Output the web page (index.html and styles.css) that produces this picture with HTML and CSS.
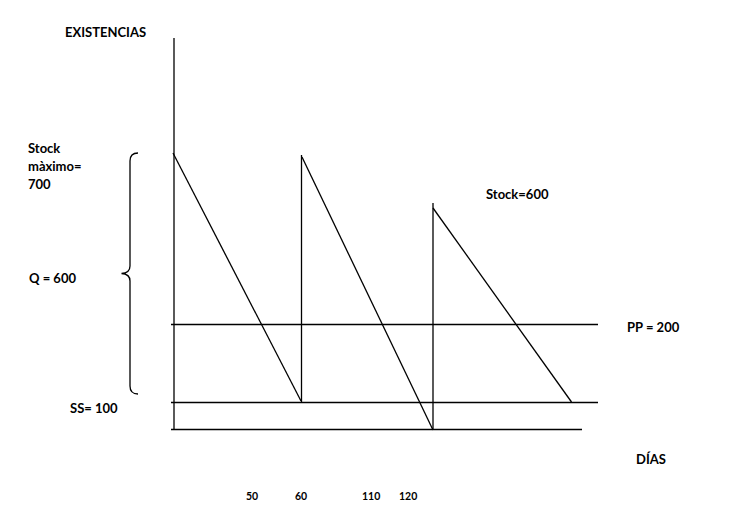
FILE: index.html
```html
<!DOCTYPE html>
<html lang="es">
<head>
<meta charset="utf-8">
<title>Existencias</title>
<link rel="stylesheet" href="styles.css">
</head>
<body>
<svg class="chart" width="734" height="522" viewBox="0 0 734 522" xmlns="http://www.w3.org/2000/svg">
  <g class="lines">
    <line x1="174" y1="38" x2="174" y2="430"/>
    <line x1="171" y1="429.5" x2="582" y2="429.5"/>
    <line x1="171" y1="324.5" x2="598" y2="324.5"/>
    <line x1="171" y1="402.5" x2="598" y2="402.5"/>
    <line x1="173" y1="153" x2="301" y2="401"/>
    <line x1="301.5" y1="402" x2="301.5" y2="155"/>
    <line x1="302" y1="157" x2="433" y2="430"/>
    <line x1="433" y1="430" x2="433" y2="203"/>
    <line x1="433" y1="208" x2="571.5" y2="402"/>
    <path d="M138,153 Q130,153 130,161 L130,266 Q130,273 121.5,273.5 Q130,274 130,281 L130,386 Q130,394 138,394"/>
  </g>
  <g class="labels">
    <text x="65" y="37">EXISTENCIAS</text>
    <text x="28" y="153">Stock</text>
    <text x="28" y="171">màximo=</text>
    <text x="28" y="189">700</text>
    <text x="29" y="283">Q = 600</text>
    <text x="70" y="413">SS= 100</text>
    <text x="486" y="199">Stock=600</text>
    <text x="627" y="332">PP = 200</text>
    <text x="636" y="464">DÍAS</text>
    <text class="small" x="246" y="500">50</text>
    <text class="small" x="295" y="500">60</text>
    <text class="small" x="362" y="500">110</text>
    <text class="small" x="399" y="500">120</text>
  </g>
</svg>
</body>
</html>
```
FILE: styles.css
```css
html, body {
  margin: 0;
  padding: 0;
  background: #ffffff;
}
.chart {
  display: block;
}
.lines line,
.lines path {
  stroke: #000000;
  stroke-width: 1.3;
  fill: none;
}
.labels text {
  font-family: Lato, "Liberation Sans", sans-serif;
  font-weight: 700;
  font-size: 13px;
  fill: #000000;
}
.labels .small {
  font-size: 10.5px;
}
```
